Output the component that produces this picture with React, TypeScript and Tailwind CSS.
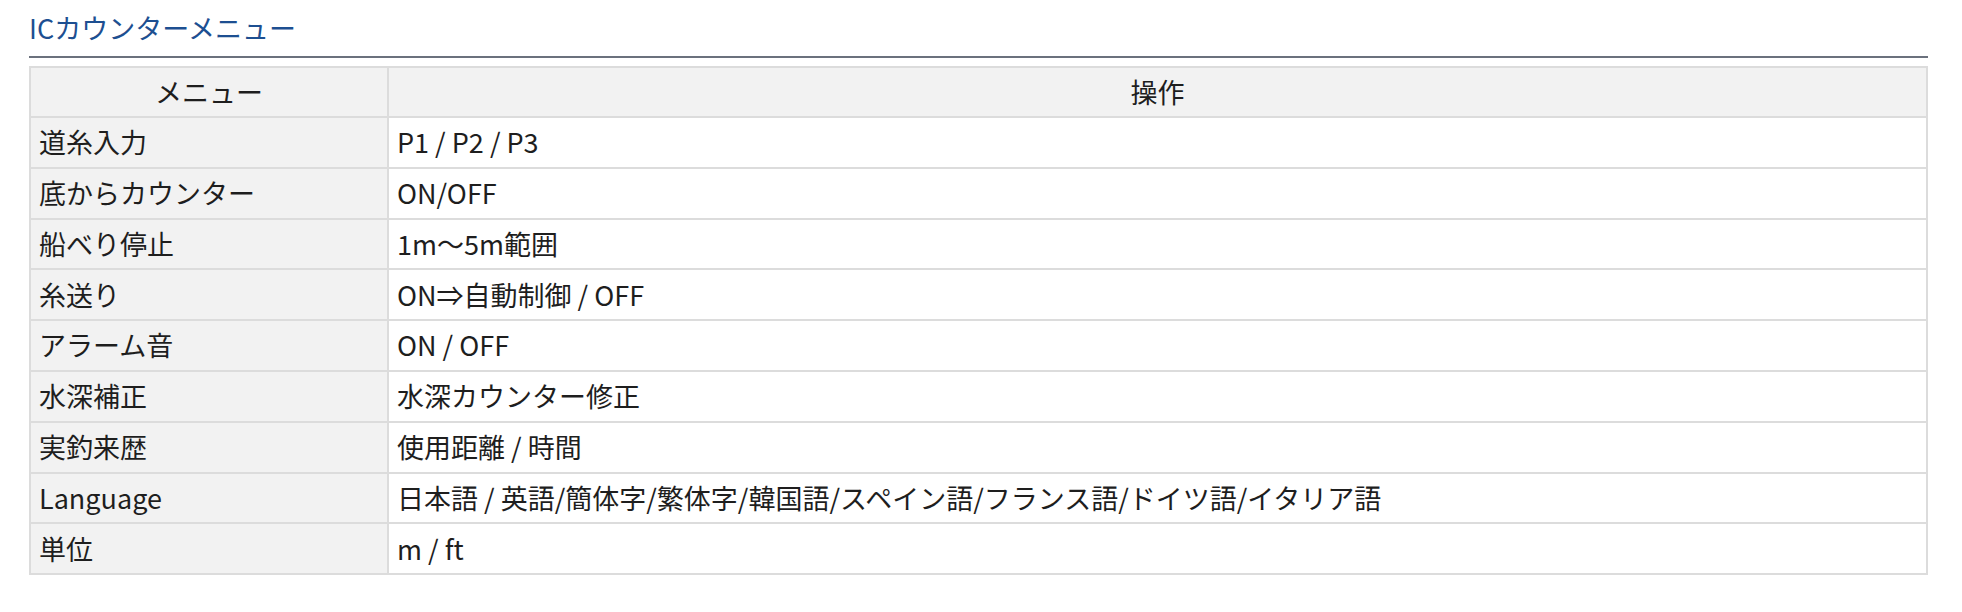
import React from 'react';

const rows: [string, string][] = [
  ['道糸入力', 'P1 / P2 / P3'],
  ['底からカウンター', 'ON/OFF'],
  ['船べり停止', '1m～5m範囲'],
  ['糸送り', 'ON⇒自動制御 / OFF'],
  ['アラーム音', 'ON / OFF'],
  ['水深補正', '水深カウンター修正'],
  ['実釣来歴', '使用距離 / 時間'],
  ['Language', '日本語 / 英語/簡体字/繁体字/韓国語/スペイン語/フランス語/ドイツ語/イタリア語'],
  ['単位', 'm / ft'],
];

const App: React.FC = () => {
  return (
    <div
      className="bg-white w-[1962px] h-[612px] pl-[29px] pt-[8px] text-[#1e1e1e]"
      style={{ fontFamily: '"Noto Sans CJK JP", "Noto Sans", sans-serif' }}
    >
      <div className="w-[1899px]">
        <h2 className="text-[27px] leading-[40px] text-[#1d4f91] font-normal">ICカウンターメニュー</h2>
        <div className="mt-[8px] h-[2px] bg-[#6b717d]" />

        {/* menu table */}
        <div className="mt-[8px] border-2 border-[#dcdcdc] text-[27px]">
          <div className="flex h-[48px] bg-[#f2f2f2]">
            <div className="w-[358px] flex items-center justify-center border-r-2 border-[#dcdcdc]">メニュー</div>
            <div className="flex-1 flex items-center justify-center">操作</div>
          </div>
          {rows.map(([menu, op], i) => (
            <div key={i} className="flex h-[50.8px] border-t-2 border-[#dcdcdc]">
              <div className="w-[358px] flex items-center pl-[8px] bg-[#f2f2f2] border-r-2 border-[#dcdcdc] whitespace-nowrap">
                {menu}
              </div>
              <div className="flex-1 flex items-center pl-[8px] bg-white whitespace-nowrap">{op}</div>
            </div>
          ))}
        </div>
      </div>
    </div>
  );
};

export default App;
